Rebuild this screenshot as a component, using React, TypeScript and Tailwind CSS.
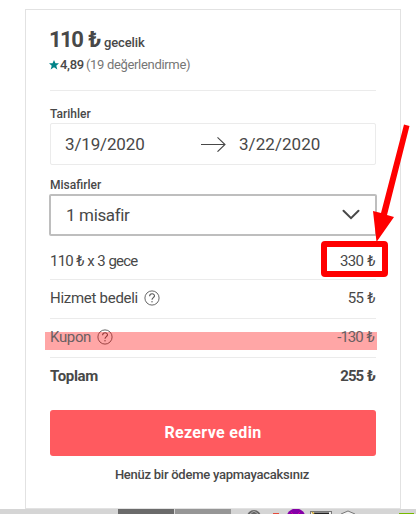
import React from "react";

const HelpIcon: React.FC = () => (
  <svg
    width="16"
    height="16"
    viewBox="0 0 16 16"
    fill="none"
    stroke="#565656"
    className="ml-[6px] shrink-0"
  >
    <circle cx="8" cy="8" r="7.1" strokeWidth="0.9" />
    <path d="M5.6 6.2C5.7 3 10.6 3.1 10.5 5.9C10.4 7.6 8 7.7 8 9.8" strokeWidth="1.1" />
    <circle cx="8" cy="11.8" r="0.7" fill="#565656" stroke="none" />
  </svg>
);

interface PriceRowProps {
  label: string;
  value: string;
  labelClass: string;
  valueClass: string;
  help?: boolean;
  last?: boolean;
}

const PriceRow: React.FC<PriceRowProps> = ({
  label,
  value,
  labelClass,
  valueClass,
  help,
  last,
}) => (
  <div
    className={
      last
        ? "flex h-[38px] items-center justify-between pb-[2px]"
        : "flex h-[39px] items-center justify-between border-b border-[#ebebeb] pb-[2px]"
    }
  >
    <div className="flex items-center">
      <span className={labelClass}>{label}</span>
      {help && <HelpIcon />}
    </div>
    <span className={valueClass}>{value}</span>
  </div>
);

const Taskbar: React.FC = () => (
  <div className="flex h-[5px] bg-[#d5d5d5] pl-[118px]">
    <div className="h-full w-14 bg-[#6b6b6b]" />
    <div className="ml-px h-full w-14 bg-[#969696]" />
    <svg width="185" height="5" viewBox="231 0 185 5">
      <circle cx="254" cy="8" r="7" fill="#666" />
      <path d="M250 5L254 2L258 5" fill="none" stroke="#aaa" />
      <rect x="273" y="4" width="6" height="1" fill="#e44b3c" />
      <circle cx="296" cy="9" r="9.5" fill="#8500a8" />
      <path d="M291 3L293 5M300 3L298 5" stroke="#d000a0" />
      <rect x="310.5" y="2.5" width="21" height="8" fill="#eee" stroke="#777" />
      <path d="M314 4.5H329" stroke="#222" strokeWidth="2" />
      <path d="M312 3L314 5" stroke="#c9a22b" strokeWidth="1.5" />
      <path d="M341 5L348 2L355 5" fill="#f3f3f3" stroke="#777" />
      <rect x="399" y="4" width="15" height="1" fill="#76b900" />
    </svg>
  </div>
);

// Marker shapes drawn over the price summary
const Annotations: React.FC = () => (
  <>
    <div className="absolute top-[332px] left-[45px] h-[18px] w-[332px] bg-[#ff0000]/35" />
    <div className="absolute top-[241px] left-[321px] h-9 w-[67px] rounded-[4px] border-6 border-[#ff0000]" />
    <svg
      width="46"
      height="130"
      viewBox="370 115 46 130"
      fill="#ff0000"
      className="absolute top-[115px] left-[370px]"
    >
      <path d="M404 124.5L409.5 126L387 215L394 217L376.5 242L373 211L381 213Z" />
    </svg>
  </>
);

const App: React.FC = () => {
  return (
    <div className="relative h-[514px] w-[416px] overflow-hidden bg-white pt-[9px] font-['Roboto','Liberation_Sans',sans-serif] whitespace-nowrap text-[#484848]">
      <div className="ml-[25px] h-[500px] w-[376px] border border-[#e2e2e2] px-6 pt-[14px]">
        <div className="-ml-px flex h-8 items-baseline">
          <span className="text-[22px] leading-8 font-bold tracking-[-1.5px] [word-spacing:2px]">
            110 ₺
          </span>
          <span className="ml-[4px] text-[13px] font-medium tracking-[-0.1px]">gecelik</span>
        </div>
        <div className="flex h-[18px] items-center text-[13px]">
          <svg width="10" height="10" viewBox="0 0 24 24" fill="#008489" className="-ml-px">
            <path d="M12 0L15.5 8H24L17.5 14L20 23L12 17.5L4 23L6.5 14L0 8H8.5Z" />
          </svg>
          <span className="ml-px font-medium tracking-[-0.3px]">4,89</span>
          <span className="ml-[2px] tracking-[-0.32px] text-[#767676]">(19 değerlendirme)</span>
        </div>
        <div className="mt-4 border-t border-[#ebebeb]" />

        <div className="mt-[14px] h-[18px] text-xs leading-[18px] font-medium">Tarihler</div>
        <div className="flex h-[42px] items-center rounded-[2px] border border-[#ebebeb] pl-[14px] text-[17px]">
          <span className="w-[136px] pt-px tracking-[-0.15px]">3/19/2020</span>
          <svg width="25" height="16" viewBox="0 0 25 16" fill="none" stroke="#484848">
            <path d="M0 8.5H24M16.5 1.3L24 8.5L16.5 15.7" strokeWidth="1.1" />
          </svg>
          <span className="ml-[13px] pt-px tracking-[0.05px]">3/22/2020</span>
        </div>

        <div className="mt-[12px] h-[17px] text-xs leading-[17px] font-medium">Misafirler</div>
        <div className="-mx-px flex h-[42px] items-center justify-between rounded-[2px] border-2 border-[#bebebe] pr-[15px] pl-[15px] text-[17px]">
          <span className="pt-px tracking-[-0.35px]">1 misafir</span>
          <svg width="18" height="12" viewBox="0 0 18 12" fill="none" stroke="#484848">
            <path d="M1.5 1.8L9 9.2L16.5 1.8" strokeWidth="2" strokeLinecap="round" />
          </svg>
        </div>

        <div className="mt-[5px] text-[15px]">
          <PriceRow
            label="110 ₺ x 3 gece"
            value="330 ₺"
            labelClass="pt-[5px] tracking-[-0.8px] [word-spacing:0.5px]"
            valueClass="pt-[5px] mr-px tracking-[-0.65px] [word-spacing:1px]"
          />
          <PriceRow
            label="Hizmet bedeli"
            value="55 ₺"
            labelClass="tracking-[-0.28px]"
            valueClass="mr-px tracking-[-0.65px] [word-spacing:1px]"
            help
          />
          <PriceRow
            label="Kupon"
            value="-130 ₺"
            labelClass="relative z-10 tracking-[-0.35px] text-[#6a6062]"
            valueClass="relative z-10 mr-[2px] tracking-[-0.95px] [word-spacing:1px] text-[#6a6062]"
            help
          />
          <PriceRow
            label="Toplam"
            value="255 ₺"
            labelClass="font-bold tracking-[-0.35px]"
            valueClass="mr-px font-bold tracking-[-0.95px] [word-spacing:1px]"
            last
          />
        </div>

        <button className="mt-[14px] block h-[46px] w-full rounded-[3px] bg-[#ff5a5f] text-base font-bold tracking-[0.35px] text-white">
          Rezerve edin
        </button>
        <div className="mt-[9px] -ml-[2px] text-center text-[13px] leading-5 font-medium tracking-[-0.25px]">
          Henüz bir ödeme yapmayacaksınız
        </div>
      </div>
      <Taskbar />
      <Annotations />
    </div>
  );
};

export default App;
